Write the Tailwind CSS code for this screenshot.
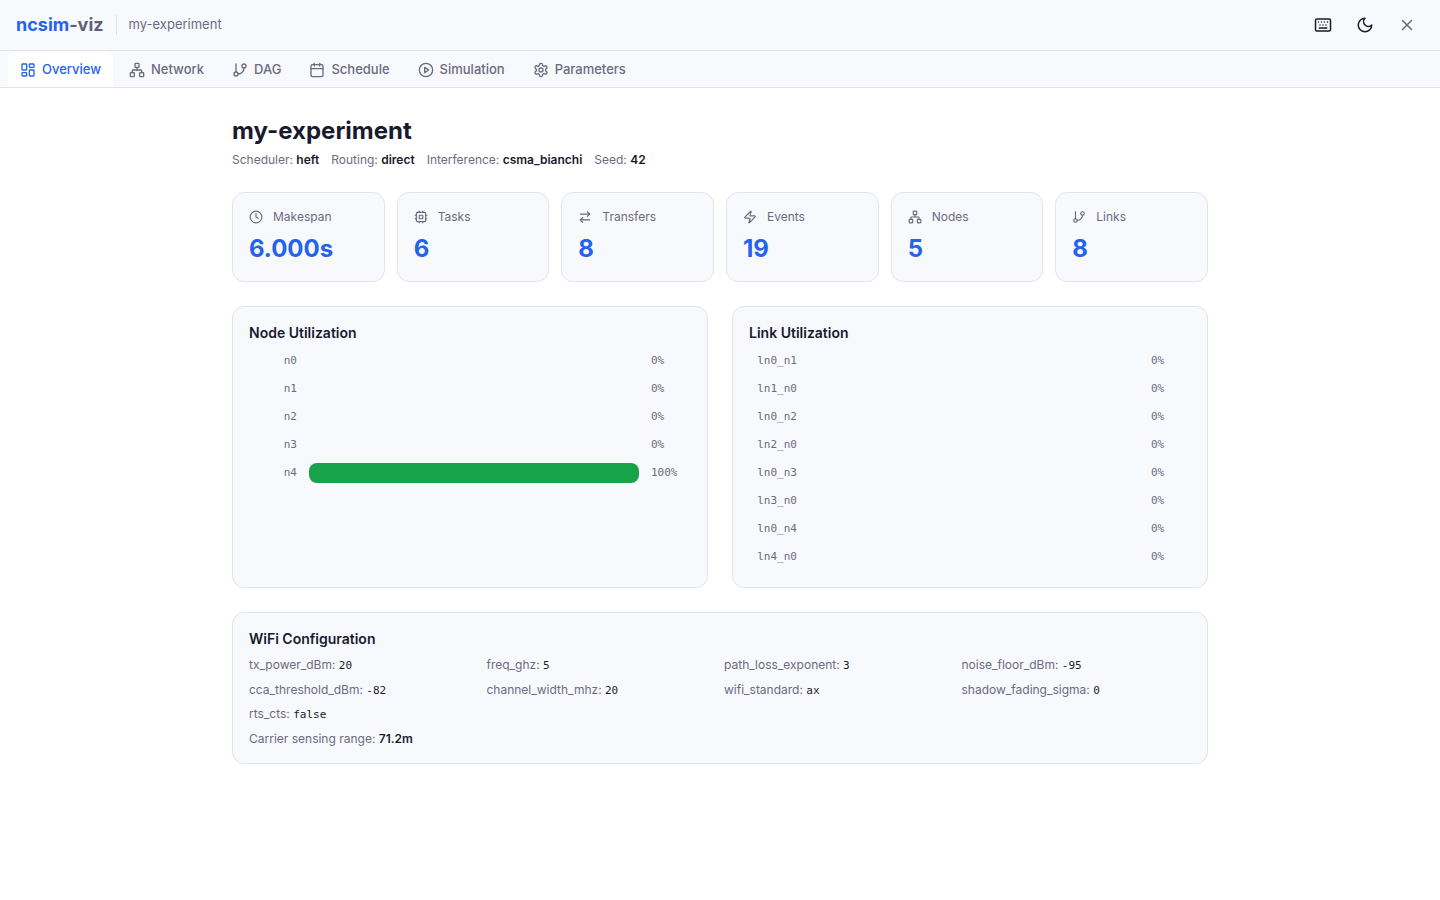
<!DOCTYPE html>
<html lang="en">
<head>
    <meta charset="UTF-8">
    <meta name="viewport" content="width=device-width, initial-scale=1.0">
    <title>ncsim-viz</title>
    <script src="https://cdn.jsdelivr.net/npm/@tailwindcss/browser@4"></script>
</head>
<body class="bg-white text-[#1a1a2e] font-['Inter',sans-serif] min-h-screen">
    <!-- Header -->
    <header class="h-[51px] flex items-center justify-between px-4 bg-[#f8f9fd] border-b border-[#e2e4ea]">
        <div class="flex items-center">
            <span class="text-lg font-bold leading-7"><span class="text-[#2563eb]">ncsim</span><span class="text-[#5f5f78]">-viz</span></span>
            <span class="w-px h-5 bg-[#e2e4ea] mx-3"></span>
            <span class="text-[13px] text-[#6b6b80]">my-experiment</span>
        </div>
        <div class="flex items-center gap-2">
            <button class="p-2 text-[#1a1a2e]">
                <svg class="w-[18px] h-[18px]" viewBox="0 0 24 24" fill="none" stroke="currentColor" stroke-width="2" stroke-linecap="round" stroke-linejoin="round"><path d="M10 8h.01"/><path d="M12 12h.01"/><path d="M14 8h.01"/><path d="M16 12h.01"/><path d="M18 8h.01"/><path d="M6 8h.01"/><path d="M7 16h10"/><path d="M8 12h.01"/><rect width="20" height="16" x="2" y="4" rx="2"/></svg>
            </button>
            <button class="p-2 text-[#1a1a2e]">
                <svg class="w-[18px] h-[18px]" viewBox="0 0 24 24" fill="none" stroke="currentColor" stroke-width="2" stroke-linecap="round" stroke-linejoin="round"><path d="M12 3a6 6 0 0 0 9 9 9 9 0 1 1-9-9Z"/></svg>
            </button>
            <button class="p-2 text-[#6b6b80]">
                <svg class="w-[18px] h-[18px]" viewBox="0 0 24 24" fill="none" stroke="currentColor" stroke-width="2" stroke-linecap="round" stroke-linejoin="round"><path d="M18 6 6 18"/><path d="m6 6 12 12"/></svg>
            </button>
        </div>
    </header>

    <!-- Tabs -->
    <nav class="h-[37px] flex items-end gap-1 px-2 bg-[#f8f9fd] border-b border-[#e2e4ea]">
        <a class="h-[35px] flex items-center gap-1.5 px-3 bg-white rounded-t-md text-[13px] font-medium text-[#2563eb]">
            <svg class="w-4 h-4" viewBox="0 0 24 24" fill="none" stroke="currentColor" stroke-width="2" stroke-linecap="round" stroke-linejoin="round"><rect width="7" height="9" x="3" y="3" rx="1"/><rect width="7" height="5" x="14" y="3" rx="1"/><rect width="7" height="9" x="14" y="12" rx="1"/><rect width="7" height="5" x="3" y="16" rx="1"/></svg>
            Overview
        </a>
        <a class="h-[35px] flex items-center gap-1.5 px-3 text-[13px] font-medium text-[#6b6b80]">
            <svg class="w-4 h-4" viewBox="0 0 24 24" fill="none" stroke="currentColor" stroke-width="2" stroke-linecap="round" stroke-linejoin="round"><rect x="16" y="16" width="6" height="6" rx="1"/><rect x="2" y="16" width="6" height="6" rx="1"/><rect x="9" y="2" width="6" height="6" rx="1"/><path d="M5 16v-3a1 1 0 0 1 1-1h12a1 1 0 0 1 1 1v3"/><path d="M12 12V8"/></svg>
            Network
        </a>
        <a class="h-[35px] flex items-center gap-1.5 px-3 text-[13px] font-medium text-[#6b6b80]">
            <svg class="w-4 h-4" viewBox="0 0 24 24" fill="none" stroke="currentColor" stroke-width="2" stroke-linecap="round" stroke-linejoin="round"><line x1="6" x2="6" y1="3" y2="15"/><circle cx="18" cy="6" r="3"/><circle cx="6" cy="18" r="3"/><path d="M18 9a9 9 0 0 1-9 9"/></svg>
            DAG
        </a>
        <a class="h-[35px] flex items-center gap-1.5 px-3 text-[13px] font-medium text-[#6b6b80]">
            <svg class="w-4 h-4" viewBox="0 0 24 24" fill="none" stroke="currentColor" stroke-width="2" stroke-linecap="round" stroke-linejoin="round"><path d="M8 2v4"/><path d="M16 2v4"/><rect width="18" height="18" x="3" y="4" rx="2"/><path d="M3 10h18"/></svg>
            Schedule
        </a>
        <a class="h-[35px] flex items-center gap-1.5 px-3 text-[13px] font-medium text-[#6b6b80]">
            <svg class="w-4 h-4" viewBox="0 0 24 24" fill="none" stroke="currentColor" stroke-width="2" stroke-linecap="round" stroke-linejoin="round"><circle cx="12" cy="12" r="10"/><polygon points="10 8 16 12 10 16 10 8"/></svg>
            Simulation
        </a>
        <a class="h-[35px] flex items-center gap-1.5 px-3 text-[13px] font-medium text-[#6b6b80]">
            <svg class="w-4 h-4" viewBox="0 0 24 24" fill="none" stroke="currentColor" stroke-width="2" stroke-linecap="round" stroke-linejoin="round"><path d="M12.22 2h-.44a2 2 0 0 0-2 2v.18a2 2 0 0 1-1 1.73l-.43.25a2 2 0 0 1-2 0l-.15-.08a2 2 0 0 0-2.73.73l-.22.38a2 2 0 0 0 .73 2.73l.15.1a2 2 0 0 1 1 1.72v.51a2 2 0 0 1-1 1.74l-.15.09a2 2 0 0 0-.73 2.73l.22.38a2 2 0 0 0 2.73.73l.15-.08a2 2 0 0 1 2 0l.43.25a2 2 0 0 1 1 1.73V20a2 2 0 0 0 2 2h.44a2 2 0 0 0 2-2v-.18a2 2 0 0 1 1-1.73l.43-.25a2 2 0 0 1 2 0l.15.08a2 2 0 0 0 2.73-.73l.22-.39a2 2 0 0 0-.73-2.73l-.15-.08a2 2 0 0 1-1-1.74v-.5a2 2 0 0 1 1-1.74l.15-.09a2 2 0 0 0 .73-2.73l-.22-.38a2 2 0 0 0-2.73-.73l-.15.08a2 2 0 0 1-2 0l-.43-.25a2 2 0 0 1-1-1.73V4a2 2 0 0 0-2-2z"/><circle cx="12" cy="12" r="3"/></svg>
            Parameters
        </a>
    </nav>

    <main class="max-w-[1024px] mx-auto px-6 pt-7">
        <h1 class="text-2xl font-bold leading-[30px]">my-experiment</h1>
        <div class="flex gap-3 mt-1.5 text-xs leading-4 text-[#6b6b80]">
            <span>Scheduler: <strong class="font-semibold text-[#1a1a2e]">heft</strong></span>
            <span>Routing: <strong class="font-semibold text-[#1a1a2e]">direct</strong></span>
            <span>Interference: <strong class="font-semibold text-[#1a1a2e]">csma_bianchi</strong></span>
            <span>Seed: <strong class="font-semibold text-[#1a1a2e]">42</strong></span>
        </div>

        <!-- Stat cards -->
        <section class="grid grid-cols-6 gap-3 mt-6">
            <div class="h-[90px] p-4 bg-[#f8f9fd] border border-[#e2e4ea] rounded-xl">
                <div class="flex items-center gap-2 text-xs leading-4 text-[#6b6b80]">
                    <svg class="w-3.5 h-3.5 mr-0.5" viewBox="0 0 24 24" fill="none" stroke="currentColor" stroke-width="2" stroke-linecap="round" stroke-linejoin="round"><circle cx="12" cy="12" r="10"/><polyline points="12 6 12 12 16 14"/></svg>
                    Makespan
                </div>
                <div class="mt-2 text-2xl font-bold leading-8 text-[#2563eb]">6.000s</div>
            </div>
            <div class="h-[90px] p-4 bg-[#f8f9fd] border border-[#e2e4ea] rounded-xl">
                <div class="flex items-center gap-2 text-xs leading-4 text-[#6b6b80]">
                    <svg class="w-3.5 h-3.5 mr-0.5" viewBox="0 0 24 24" fill="none" stroke="currentColor" stroke-width="2" stroke-linecap="round" stroke-linejoin="round"><rect width="16" height="16" x="4" y="4" rx="2"/><rect width="6" height="6" x="9" y="9" rx="1"/><path d="M15 2v2"/><path d="M15 20v2"/><path d="M2 15h2"/><path d="M2 9h2"/><path d="M20 15h2"/><path d="M20 9h2"/><path d="M9 2v2"/><path d="M9 20v2"/></svg>
                    Tasks
                </div>
                <div class="mt-2 text-2xl font-bold leading-8 text-[#2563eb]">6</div>
            </div>
            <div class="h-[90px] p-4 bg-[#f8f9fd] border border-[#e2e4ea] rounded-xl">
                <div class="flex items-center gap-2 text-xs leading-4 text-[#6b6b80]">
                    <svg class="w-3.5 h-3.5 mr-0.5" viewBox="0 0 24 24" fill="none" stroke="currentColor" stroke-width="2" stroke-linecap="round" stroke-linejoin="round"><path d="m16 3 4 4-4 4"/><path d="M20 7H4"/><path d="m8 21-4-4 4-4"/><path d="M4 17h16"/></svg>
                    Transfers
                </div>
                <div class="mt-2 text-2xl font-bold leading-8 text-[#2563eb]">8</div>
            </div>
            <div class="h-[90px] p-4 bg-[#f8f9fd] border border-[#e2e4ea] rounded-xl">
                <div class="flex items-center gap-2 text-xs leading-4 text-[#6b6b80]">
                    <svg class="w-3.5 h-3.5 mr-0.5" viewBox="0 0 24 24" fill="none" stroke="currentColor" stroke-width="2" stroke-linecap="round" stroke-linejoin="round"><path d="M4 14a1 1 0 0 1-.78-1.63l9.9-10.2a.5.5 0 0 1 .86.46l-1.92 6.02A1 1 0 0 0 13 10h7a1 1 0 0 1 .78 1.63l-9.9 10.2a.5.5 0 0 1-.86-.46l1.92-6.02A1 1 0 0 0 11 14z"/></svg>
                    Events
                </div>
                <div class="mt-2 text-2xl font-bold leading-8 text-[#2563eb]">19</div>
            </div>
            <div class="h-[90px] p-4 bg-[#f8f9fd] border border-[#e2e4ea] rounded-xl">
                <div class="flex items-center gap-2 text-xs leading-4 text-[#6b6b80]">
                    <svg class="w-3.5 h-3.5 mr-0.5" viewBox="0 0 24 24" fill="none" stroke="currentColor" stroke-width="2" stroke-linecap="round" stroke-linejoin="round"><rect x="16" y="16" width="6" height="6" rx="1"/><rect x="2" y="16" width="6" height="6" rx="1"/><rect x="9" y="2" width="6" height="6" rx="1"/><path d="M5 16v-3a1 1 0 0 1 1-1h12a1 1 0 0 1 1 1v3"/><path d="M12 12V8"/></svg>
                    Nodes
                </div>
                <div class="mt-2 text-2xl font-bold leading-8 text-[#2563eb]">5</div>
            </div>
            <div class="h-[90px] p-4 bg-[#f8f9fd] border border-[#e2e4ea] rounded-xl">
                <div class="flex items-center gap-2 text-xs leading-4 text-[#6b6b80]">
                    <svg class="w-3.5 h-3.5 mr-0.5" viewBox="0 0 24 24" fill="none" stroke="currentColor" stroke-width="2" stroke-linecap="round" stroke-linejoin="round"><line x1="6" x2="6" y1="3" y2="15"/><circle cx="18" cy="6" r="3"/><circle cx="6" cy="18" r="3"/><path d="M18 9a9 9 0 0 1-9 9"/></svg>
                    Links
                </div>
                <div class="mt-2 text-2xl font-bold leading-8 text-[#2563eb]">8</div>
            </div>
        </section>

        <!-- Utilization -->
        <section class="grid grid-cols-2 gap-6 mt-6">
            <div class="h-[282px] p-4 bg-[#f8f9fd] border border-[#e2e4ea] rounded-xl">
                <h2 class="text-sm font-semibold leading-5 mb-2">Node Utilization</h2>
                <div class="flex flex-col gap-2 font-['DejaVu_Sans_Mono',monospace] text-[11px] text-[#6b6b80]">
                    <div class="flex items-center gap-3 h-5"><span class="w-12 text-right">n0</span><div class="flex-1 h-5"></div><span class="w-10">0%</span></div>
                    <div class="flex items-center gap-3 h-5"><span class="w-12 text-right">n1</span><div class="flex-1 h-5"></div><span class="w-10">0%</span></div>
                    <div class="flex items-center gap-3 h-5"><span class="w-12 text-right">n2</span><div class="flex-1 h-5"></div><span class="w-10">0%</span></div>
                    <div class="flex items-center gap-3 h-5"><span class="w-12 text-right">n3</span><div class="flex-1 h-5"></div><span class="w-10">0%</span></div>
                    <div class="flex items-center gap-3 h-5"><span class="w-12 text-right">n4</span><div class="flex-1 h-5 rounded-lg bg-[#16a34a]"></div><span class="w-10">100%</span></div>
                </div>
            </div>
            <div class="h-[282px] p-4 bg-[#f8f9fd] border border-[#e2e4ea] rounded-xl">
                <h2 class="text-sm font-semibold leading-5 mb-2">Link Utilization</h2>
                <div class="flex flex-col gap-2 font-['DejaVu_Sans_Mono',monospace] text-[11px] text-[#6b6b80]">
                    <div class="flex items-center gap-3 h-5"><span class="w-12 text-right">ln0_n1</span><div class="flex-1 h-5"></div><span class="w-10">0%</span></div>
                    <div class="flex items-center gap-3 h-5"><span class="w-12 text-right">ln1_n0</span><div class="flex-1 h-5"></div><span class="w-10">0%</span></div>
                    <div class="flex items-center gap-3 h-5"><span class="w-12 text-right">ln0_n2</span><div class="flex-1 h-5"></div><span class="w-10">0%</span></div>
                    <div class="flex items-center gap-3 h-5"><span class="w-12 text-right">ln2_n0</span><div class="flex-1 h-5"></div><span class="w-10">0%</span></div>
                    <div class="flex items-center gap-3 h-5"><span class="w-12 text-right">ln0_n3</span><div class="flex-1 h-5"></div><span class="w-10">0%</span></div>
                    <div class="flex items-center gap-3 h-5"><span class="w-12 text-right">ln3_n0</span><div class="flex-1 h-5"></div><span class="w-10">0%</span></div>
                    <div class="flex items-center gap-3 h-5"><span class="w-12 text-right">ln0_n4</span><div class="flex-1 h-5"></div><span class="w-10">0%</span></div>
                    <div class="flex items-center gap-3 h-5"><span class="w-12 text-right">ln4_n0</span><div class="flex-1 h-5"></div><span class="w-10">0%</span></div>
                </div>
            </div>
        </section>

        <!-- WiFi -->
        <section class="mt-6 p-4 bg-[#f8f9fd] border border-[#e2e4ea] rounded-xl">
            <h2 class="text-sm font-semibold leading-5 mb-2">WiFi Configuration</h2>
            <div class="grid grid-cols-4 gap-2 text-xs text-[#6b6b80]">
                <div>tx_power_dBm: <code class="font-['DejaVu_Sans_Mono',monospace] text-[11px] text-[#1a1a2e]">20</code></div>
                <div>freq_ghz: <code class="font-['DejaVu_Sans_Mono',monospace] text-[11px] text-[#1a1a2e]">5</code></div>
                <div>path_loss_exponent: <code class="font-['DejaVu_Sans_Mono',monospace] text-[11px] text-[#1a1a2e]">3</code></div>
                <div>noise_floor_dBm: <code class="font-['DejaVu_Sans_Mono',monospace] text-[11px] text-[#1a1a2e]">-95</code></div>
                <div>cca_threshold_dBm: <code class="font-['DejaVu_Sans_Mono',monospace] text-[11px] text-[#1a1a2e]">-82</code></div>
                <div>channel_width_mhz: <code class="font-['DejaVu_Sans_Mono',monospace] text-[11px] text-[#1a1a2e]">20</code></div>
                <div>wifi_standard: <code class="font-['DejaVu_Sans_Mono',monospace] text-[11px] text-[#1a1a2e]">ax</code></div>
                <div>shadow_fading_sigma: <code class="font-['DejaVu_Sans_Mono',monospace] text-[11px] text-[#1a1a2e]">0</code></div>
                <div>rts_cts: <code class="font-['DejaVu_Sans_Mono',monospace] text-[11px] text-[#1a1a2e]">false</code></div>
            </div>
            <div class="mt-2 text-xs text-[#6b6b80]">Carrier sensing range: <strong class="font-semibold text-[#1a1a2e]">71.2m</strong></div>
        </section>
    </main>
</body>
</html>
